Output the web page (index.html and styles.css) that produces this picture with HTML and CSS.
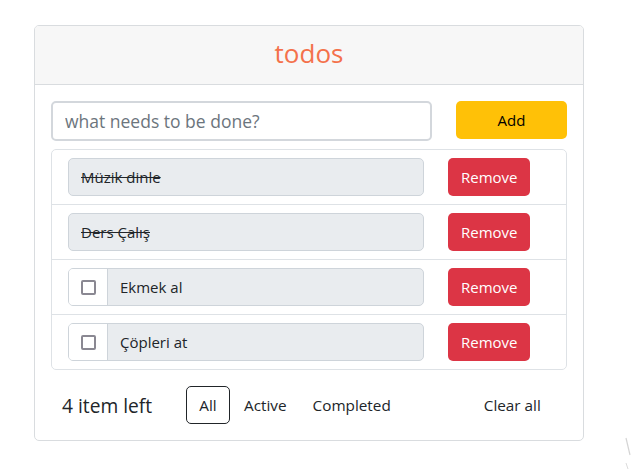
FILE: index.html
```html
<!DOCTYPE html>
<html lang="tr">
<head>
<meta charset="utf-8">
<title>todos</title>
<link rel="stylesheet" href="styles.css">
</head>
<body>
<div class="page">
  <div class="card">
    <div class="card-header">todos</div>
    <div class="card-body">
      <div class="new-row">
        <input class="new-input" type="text" placeholder="what needs to be done?">
        <button class="btn btn-add">Add</button>
      </div>
      <ul class="list">
        <li class="item">
          <div class="group"><span class="text done">Müzik dinle</span></div>
          <button class="btn btn-remove">Remove</button>
        </li>
        <li class="item">
          <div class="group"><span class="text done">Ders Çalış</span></div>
          <button class="btn btn-remove">Remove</button>
        </li>
        <li class="item">
          <div class="group"><span class="check"><span class="box"></span></span><span class="text">Ekmek al</span></div>
          <button class="btn btn-remove">Remove</button>
        </li>
        <li class="item">
          <div class="group"><span class="check"><span class="box"></span></span><span class="text">Çöpleri at</span></div>
          <button class="btn btn-remove">Remove</button>
        </li>
      </ul>
      <div class="footer">
        <span class="count">4 item left</span>
        <button class="btn btn-filter active">All</button>
        <button class="btn btn-filter">Active</button>
        <button class="btn btn-filter">Completed</button>
        <button class="btn btn-filter clear">Clear all</button>
      </div>
    </div>
  </div>
</div>
<svg class="watermark" width="8" height="34" viewBox="0 0 8 34" aria-hidden="true">
  <path d="M2 2 L6 19" stroke="#d4d4d4" stroke-width="1.2" fill="none"/>
  <path d="M2 27 L4 33" stroke="#dcdcdc" stroke-width="1" fill="none"/>
</svg>
</body>
</html>
```
FILE: styles.css
```css
html, body {
  margin: 0;
  padding: 0;
  background: #fff;
  overflow: hidden;
  font-family: "Open Sans", "Noto Sans", sans-serif;
  color: #212529;
}
.page {
  padding: 25px 0 0 34px;
}
.card {
  width: 548px;
  border: 1px solid #d9dcdf;
  border-radius: 5px;
  overflow: hidden;
}
.card-header {
  height: 58px;
  background: #f7f7f7;
  border-bottom: 1px solid #d9dcdf;
  color: #f4714b;
  font-size: 26px;
  line-height: 54px;
  text-align: center;
}
.card-body {
  padding: 16px;
}
.new-row {
  display: flex;
  gap: 24px;
  align-items: flex-start;
}
.new-input {
  width: 381px;
  height: 40px;
  box-sizing: border-box;
  border: 2px solid #d3d7dc;
  border-radius: 5px;
  padding: 0 12px;
  font-family: inherit;
  font-size: 17.5px;
  color: #212529;
  outline: none;
}
.new-input::placeholder {
  color: #6c757d;
}
.btn {
  font-family: inherit;
  font-size: 15px;
  border: 1px solid transparent;
  border-radius: 5px;
  height: 38px;
  padding: 0 12px;
  cursor: pointer;
  background: transparent;
  color: #212529;
}
.btn-add {
  width: 111px;
  background: #ffc107;
  color: #000;
}
.list {
  list-style: none;
  margin: 8px 0 0;
  padding: 0;
  border: 1px solid #dee2e6;
  border-radius: 5px;
}
.item {
  display: flex;
  align-items: center;
  gap: 24px;
  padding: 8px 16px;
  height: 38px;
}
.item + .item {
  border-top: 1px solid #dee2e6;
}
.group {
  width: 356px;
  height: 38px;
  box-sizing: border-box;
  display: flex;
  border: 1px solid #ced4da;
  border-radius: 5px;
  background: #e9ecef;
  overflow: hidden;
}
.check {
  width: 38px;
  flex: none;
  background: #fff;
  border-right: 1px solid #ced4da;
  display: flex;
  align-items: center;
  justify-content: center;
}
.box {
  width: 11px;
  height: 11px;
  border: 2px solid #8a8892;
  border-radius: 2px;
}
.text {
  display: flex;
  align-items: center;
  padding: 0 12px;
  font-size: 15px;
  color: #212529;
}
.done {
  text-decoration: line-through;
}
.btn-remove {
  width: 82px;
  background: #dc3545;
  color: #fff;
}
.footer {
  display: flex;
  align-items: center;
  margin-top: 16px;
  padding-left: 11px;
}
.count {
  font-size: 19.2px;
  width: 124px;
}
.btn-filter {
  padding: 0 12px;
  font-size: 15.3px;
}
.btn-filter.active {
  border-color: #212529;
  width: 44px;
  padding: 0;
  margin-right: 1px;
}
.clear {
  margin-left: 67px;
}
.watermark {
  position: absolute;
  left: 624px;
  top: 436px;
}
```
